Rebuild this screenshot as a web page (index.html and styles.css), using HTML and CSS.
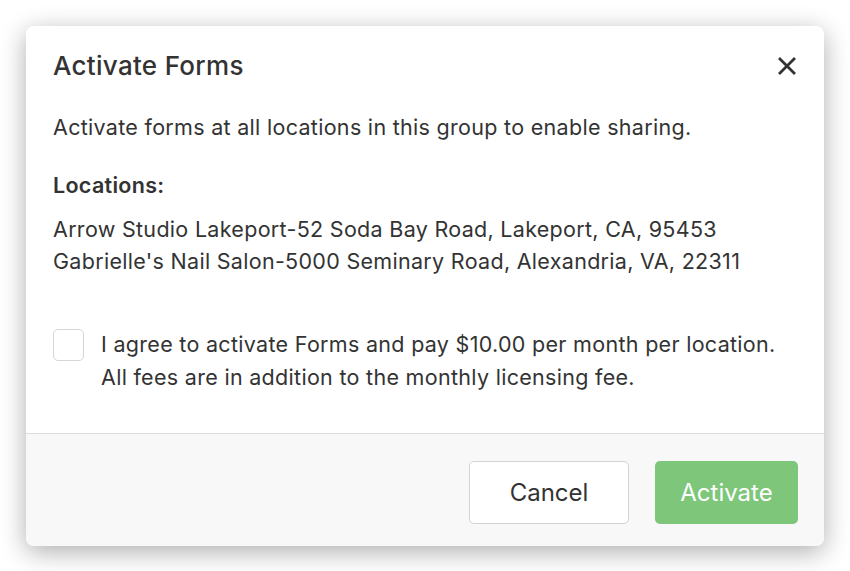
FILE: index.html
```html
<!DOCTYPE html>
<html lang="en">
<head>
    <meta charset="UTF-8">
    <meta name="viewport" content="width=device-width, initial-scale=1.0">
    <title>Activate Forms</title>
    <link rel="stylesheet" href="styles.css">
</head>
<body>
    <div class="modal">
        <div class="modal-header">
            <h2 class="modal-title">Activate Forms</h2>
            <button class="close" aria-label="Close">
                <svg width="18" height="18" viewBox="0 0 18 18">
                    <path d="M2 2 L16 16 M16 2 L2 16" stroke="#333" stroke-width="2.8" stroke-linecap="square" fill="none"/>
                </svg>
            </button>
        </div>
        <div class="modal-body">
            <p class="intro">Activate forms at all locations in this group to enable sharing.</p>
            <p class="label">Locations:</p>
            <ul class="locations">
                <li>Arrow Studio Lakeport-52 Soda Bay Road, Lakeport, CA, 95453</li>
                <li>Gabrielle's Nail Salon-5000 Seminary Road, Alexandria, VA, 22311</li>
            </ul>
            <label class="agree">
                <input type="checkbox">
                <span class="box"></span>
                <span class="agree-text">I agree to activate Forms and pay $10.00 per month per location.<br>All fees are in addition to the monthly licensing fee.</span>
            </label>
        </div>
        <div class="modal-footer">
            <button class="btn btn-cancel">Cancel</button>
            <button class="btn btn-activate">Activate</button>
        </div>
    </div>
</body>
</html>
```

FILE: styles.css
```css
body {
    margin: 0;
    padding: 26px;
    background: #fff;
    font-family: Inter, "Open Sans", sans-serif;
    color: #333;
}
.modal {
    width: 798px;
    background: #fff;
    border-radius: 8px;
    box-shadow: 0 6px 26px rgba(0, 0, 0, 0.32);
    overflow: hidden;
}
.modal-header {
    display: flex;
    justify-content: space-between;
    align-items: center;
    padding: 22px 27px 0 27px;
}
.modal-title {
    margin: 0;
    font-size: 26px;
    font-weight: 500;
    letter-spacing: 0.3px;
    line-height: 36px;
}
.close {
    border: none;
    background: none;
    padding: 0;
    width: 18px;
    height: 18px;
    margin-right: 1px;
    cursor: pointer;
}
.close svg {
    display: block;
}
.modal-body {
    padding: 27px 27px 39px 27px;
    font-size: 21.5px;
    letter-spacing: 0.3px;
    line-height: 32px;
}
.modal-body p {
    margin: 0;
}
.label {
    margin-top: 26px !important;
    font-weight: 600;
}
.locations {
    list-style: none;
    margin: 12px 0 0 0;
    padding: 0;
}
.agree {
    display: flex;
    align-items: flex-start;
    gap: 17px;
    margin-top: 52px;
    cursor: pointer;
}
.agree input {
    display: none;
}
.box {
    flex: none;
    width: 29px;
    height: 30px;
    border: 1px solid #d6d6d6;
    border-radius: 5px;
    background: #fff;
}
.agree-text {
    line-height: 33px;
    margin-top: -1px;
}
.modal-footer {
    display: flex;
    justify-content: flex-end;
    gap: 26px;
    padding: 27px 26px 22px 26px;
    background: #f8f8f8;
    border-top: 1.5px solid #dcdcdc;
}
.btn {
    height: 63px;
    border-radius: 5px;
    font-family: Inter, "Open Sans", sans-serif;
    font-size: 24px;
    cursor: pointer;
}
.btn-cancel {
    width: 160px;
    background: #fff;
    color: #333;
    border: 1px solid #d3d3d3;
}
.btn-activate {
    width: 143px;
    background: #7dc67a;
    color: #fff;
    border: none;
}
```
